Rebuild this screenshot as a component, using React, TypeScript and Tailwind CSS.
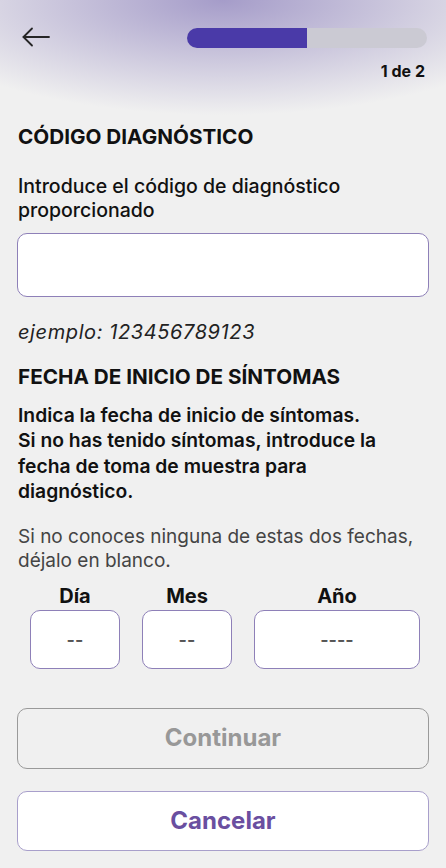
import React from "react";

function BackArrow() {
  return (
    <svg width="28" height="20" viewBox="0 0 28 20" fill="none" stroke="#262626" strokeWidth="1.8" strokeLinecap="round" strokeLinejoin="round">
      <path d="M27 10H1.5" />
      <path d="M10 1.5L1.5 10L10 18.5" />
    </svg>
  );
}

function DateBox({ label, placeholder }: { label: string; placeholder: string }) {
  return (
    <div className="flex flex-col items-center">
      <span className="text-[20px] leading-[24px] font-bold text-[#111]">{label}</span>
      <div className="mt-[2px] flex h-[59px] w-full items-center justify-center rounded-[10px] border border-[#8e80b8] bg-white text-[18px] font-semibold text-[#555]">
        {placeholder}
      </div>
    </div>
  );
}

export default function App() {
  return (
    <div
      className="min-h-[868px] w-full bg-[#f0f0f0] bg-[radial-gradient(ellipse_75%_115px_at_50%_0,#a59cc9,#f0f0f0)] px-[18px] pb-4 text-[#111]"
      style={{ fontFamily: "Inter, 'Noto Sans', sans-serif" }}
    >
      {/* cabecera */}
      <div className="flex items-center justify-between pt-[28px]">
        <button className="ml-[4px] mt-[-2px]">
          <BackArrow />
        </button>
        <div className="mr-[1px] flex h-[20px] w-[240px] overflow-hidden rounded-full bg-[#cbcad3]">
          <div className="h-full w-1/2 bg-[#4a3aa8]" />
        </div>
      </div>
      <p className="mt-[13px] pr-[3px] text-right text-[16px] leading-[20px] font-bold">1 de 2</p>

      {/* código */}
      <h2 className="mt-[44px] text-[20.7px] leading-[24px] font-bold">CÓDIGO DIAGNÓSTICO</h2>
      <p className="mt-[25px] text-[19.5px] leading-[24px] font-medium">
        Introduce el código de diagnóstico proporcionado
      </p>
      <input
        type="text"
        className="mt-[11px] block h-[64px] w-[412px] -ml-[1px] rounded-[10px] border border-[#8e80b8] bg-white px-3 text-[18px] outline-none"
      />
      <p className="mt-[23px] text-[20px] leading-[24px] tracking-[0.6px] italic text-[#222]">ejemplo: 123456789123</p>

      {/* fecha */}
      <h2 className="mt-[21px] text-[20.7px] leading-[24px] font-bold">FECHA DE INICIO DE SÍNTOMAS</h2>
      <p className="mt-[14px] text-[19.3px] leading-[25.4px] font-semibold">
        Indica la fecha de inicio de síntomas.
        <br />
        Si no has tenido síntomas, introduce la
        <br />
        fecha de toma de muestra para
        <br />
        diagnóstico.
      </p>
      <p className="mt-[20px] text-[19px] leading-[24px] text-[#444]">
        Si no conoces ninguna de estas dos fechas, déjalo en blanco.
      </p>

      <div className="mt-[11px] grid grid-cols-[90px_90px_1fr] gap-x-[22px] pl-[12px] pr-[8px]">
        <DateBox label="Día" placeholder="--" />
        <DateBox label="Mes" placeholder="--" />
        <DateBox label="Año" placeholder="----" />
      </div>

      {/* botones */}
      <button className="mt-[39px] -ml-[1px] flex h-[61px] w-[412px] items-center justify-center rounded-[10px] border border-[#9a9a9a] text-[24px] font-bold text-[#989898]">
        Continuar
      </button>
      <button className="mt-[22px] -ml-[1px] flex h-[60px] w-[412px] items-center justify-center rounded-[10px] border border-[#a89fcb] bg-white text-[24px] font-bold text-[#6a4fa0]">
        Cancelar
      </button>
    </div>
  );
}
